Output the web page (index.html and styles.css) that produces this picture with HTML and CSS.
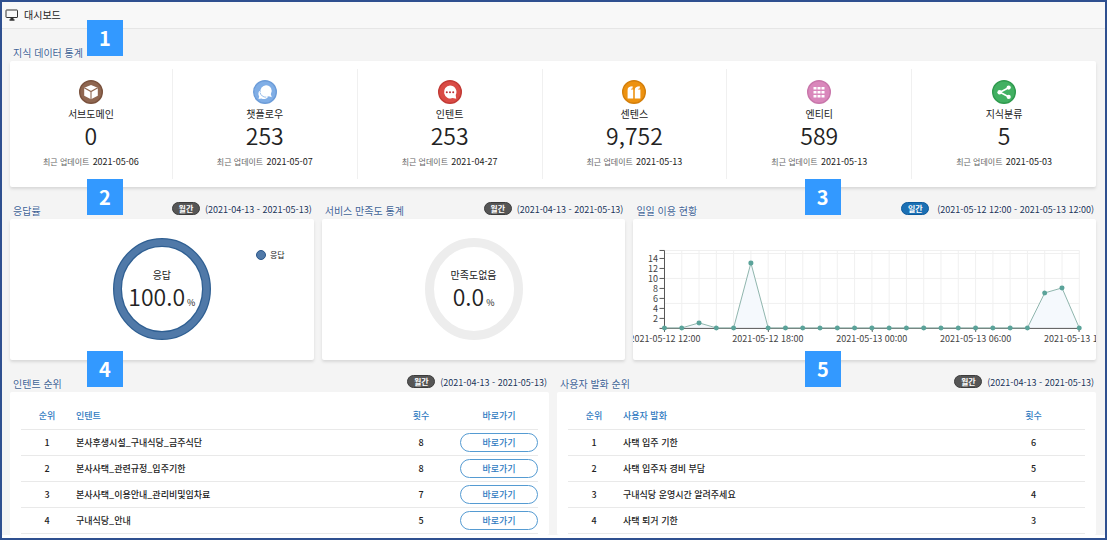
FILE: index.html
```html
<!DOCTYPE html>
<html lang="ko">
<head>
<meta charset="utf-8">
<title>대시보드</title>
<link rel="stylesheet" href="styles.css">
</head>
<body>
<div class="frame">
  <header class="topbar">
    <svg class="topbar-icon" width="14" height="12" viewBox="0 0 14 12" fill="none" stroke="#333"><rect x="1" y="1" width="11.5" height="7.5" rx="0.5"/><path d="M5.5 9.5h3M4.5 11h5" stroke-width="1.4"/></svg>
    <h1 class="topbar-title">대시보드</h1>
  </header>
  <main class="content">
    <section>
      <div class="head">
        <h2 class="title">지식 데이터 통계</h2>
        <span class="marker marker-left">1</span>
      </div>
      <div class="card stats">
        <div class="stat">
          <svg class="stat-icon" viewBox="0 0 24 24"><circle cx="12" cy="12" r="11.3" fill="#8f6650" stroke="#7a523d" stroke-width="1.4"/><path d="M12 5l6.8 2.8v8L12 19.3l-6.8-3.5v-8z" fill="#fff"/><path d="M5.2 7.8L12 11.6l6.8-3.8M12 11.6v7.7" fill="none" stroke="#8f6650" stroke-width="1.1"/></svg>
          <h3 class="stat-name">서브도메인</h3>
          <p class="big">0</p>
          <p class="updated">최근 업데이트 <time>2021-05-06</time></p>
        </div>
        <div class="stat">
          <svg class="stat-icon" viewBox="0 0 24 24"><circle cx="12" cy="12" r="11.3" fill="#80aee6" stroke="#6c9cd8" stroke-width="1.4"/><path d="M13 5.2a5.8 5.8 0 0 1 4.8 9l1 3-3-1A5.8 5.8 0 1 1 13 5.2z" fill="#fff"/><path d="M6.2 11c-1.200 2-.9 4 0 5.400l-.7 2.700 2.900-.7c2.200 1 5 .6 6.400-1.200" fill="#fff"/><path d="M7 12.500c.8 3 3.200 4.800 6.200 4.700" fill="none" stroke="#80aee6" stroke-width=".8"/></svg>
          <h3 class="stat-name">챗플로우</h3>
          <p class="big">253</p>
          <p class="updated">최근 업데이트 <time>2021-05-07</time></p>
        </div>
        <div class="stat">
          <svg class="stat-icon" viewBox="0 0 24 24"><circle cx="12" cy="12" r="11.3" fill="#d94b45" stroke="#c23a35" stroke-width="1.4"/><path d="M12 5.500a6.500 6.500 0 0 1 5.700 9.600l.5 3.600-3.500-.6A6.500 6.500 0 1 1 12 5.500z" fill="#fff"/><g fill="#b92f35"><circle cx="8.800" cy="12.200" r="1"/><circle cx="12" cy="12.200" r="1"/><circle cx="15.200" cy="12.200" r="1"/></g></svg>
          <h3 class="stat-name">인텐트</h3>
          <p class="big">253</p>
          <p class="updated">최근 업데이트 <time>2021-04-27</time></p>
        </div>
        <div class="stat">
          <svg class="stat-icon" viewBox="0 0 24 24"><circle cx="12" cy="12" r="11.3" fill="#ed9210" stroke="#d37f0b" stroke-width="1.4"/><path d="M5.600 18.500V10c0-2.600 1.700-3.800 5-3.800v2.200c-1 0-1.700.4-1.700 1.200h2.300v8.900zM12.800 18.500V10c0-2.600 1.700-3.800 5-3.800v2.200c-1 0-1.700.4-1.700 1.200h2.300v8.900z" fill="#fff"/></svg>
          <h3 class="stat-name">센텐스</h3>
          <p class="big">9,752</p>
          <p class="updated">최근 업데이트 <time>2021-05-13</time></p>
        </div>
        <div class="stat">
          <svg class="stat-icon" viewBox="0 0 24 24"><circle cx="12" cy="12" r="11.3" fill="#d987bb" stroke="#c876aa" stroke-width="1.4"/><path d="M6.500 7h3v2.500h-3zm4 0h3v2.500h-3zm4 0h3v2.500h-3zm-8 4h3v2.500h-3zm4 0h3v2.500h-3zm4 0h3v2.500h-3zm-8 4h3v2.500h-3zm4 0h3v2.500h-3zm4 0h3v2.500h-3z" fill="#fff"/></svg>
          <h3 class="stat-name">엔티티</h3>
          <p class="big">589</p>
          <p class="updated">최근 업데이트 <time>2021-05-13</time></p>
        </div>
        <div class="stat">
          <svg class="stat-icon" viewBox="0 0 24 24"><circle cx="12" cy="12" r="11.3" fill="#42b062" stroke="#2f9a4e" stroke-width="1.4"/><path d="M16.500 7.700L8 12.300l8.500 4.500" fill="none" stroke="#fff" stroke-width="1.600"/><g fill="#fff"><circle cx="16.700" cy="7.600" r="2.100"/><circle cx="7.600" cy="12.300" r="2.200"/><circle cx="16.700" cy="16.900" r="2.100"/></g></svg>
          <h3 class="stat-name">지식분류</h3>
          <p class="big">5</p>
          <p class="updated">최근 업데이트 <time>2021-05-03</time></p>
        </div>
      </div>
    </section>

    <div class="charts">
      <section>
        <div class="head">
          <h2 class="title">응답률</h2>
          <span class="pill">월간</span><span class="period">(2021-04-13 - 2021-05-13)</span>
          <span class="marker marker-left">2</span>
        </div>
        <div class="card chart-card">
          <div class="donut">
            <svg class="ring" viewBox="0 0 98 102" fill="none"><ellipse cx="49" cy="51" rx="44.500" ry="46.500" stroke="#2f5f92" stroke-width="9"/><ellipse cx="49" cy="51" rx="44.500" ry="46.500" stroke="#5079a8" stroke-width="6.500"/></svg>
            <div class="donut-text"><p class="donut-name">응답</p><p class="big">100.0<small class="unit">%</small></p></div>
          </div>
          <p class="legend"><span class="legend-dot"></span>응답</p>
        </div>
      </section>
      <section>
        <div class="head">
          <h2 class="title">서비스 만족도 통계</h2>
          <span class="pill">월간</span><span class="period">(2021-04-13 - 2021-05-13)</span>
        </div>
        <div class="card chart-card">
          <div class="donut">
            <svg class="ring" viewBox="0 0 98 102" fill="none"><ellipse cx="49" cy="51" rx="44.500" ry="46.500" stroke="#ededed" stroke-width="9"/></svg>
            <div class="donut-text"><p class="donut-name">만족도없음</p><p class="big">0.0<small class="unit">%</small></p></div>
          </div>
        </div>
      </section>
      <section>
        <div class="head">
          <h2 class="title">일일 이용 현황</h2>
          <span class="pill pill-day">일간</span><span class="period">(2021-05-12 12:00 - 2021-05-13 12:00)</span>
          <span class="marker marker-usage">3</span>
        </div>
        <div class="card chart-card">
          <svg class="usage" viewBox="0 0 463 141" fill="none">
            <defs><marker id="dot" markerWidth="6" markerHeight="6" refX="3" refY="3" markerUnits="userSpaceOnUse"><circle cx="3" cy="3" r="2.500" fill="#5ba39a"/></marker></defs>
            <path stroke="#f0f0f0" d="M31.500 31.500h415.200M31.500 34.500h415.200M31.500 59.500h415.200M31.500 84.500h415.200M48.800 31.500v77M66.100 31.500v77M83.400 31.500v77M100.700 31.500v77M118 31.500v77M135.300 31.500v77M152.600 31.500v77M169.900 31.500v77M187.200 31.500v77M204.500 31.500v77M221.800 31.500v77M239.100 31.500v77M256.400 31.500v77M273.700 31.500v77M291 31.500v77M308.300 31.500v77M325.600 31.500v77M342.900 31.500v77M360.200 31.500v77M377.500 31.500v77M394.800 31.500v77M412.100 31.500v77M429.400 31.500v77M446.700 31.500v77"/>
            <path fill="#f5f9fd" d="M31.500 109h17.300l17.300-5 17.300 5h17.300L118 44l17.300 65h259.500l17.300-35 17.300-5 17.300 40z"/>
            <path stroke="#555" d="M26.500 31.500h5v77.500M26.500 39.500h5M26.500 49.500h5M26.500 59.500h5M26.500 69.500h5M26.500 79.500h5M26.500 89.500h5M26.500 99.500h5M26.500 109.500h420.200M31.500 109v4M135.500 109v4M239.500 109v4M343 109v4M446.500 109v4"/>
            <path class="series" d="M31.500 109L48.800 109L66.100 104L83.400 109L100.700 109L118 44L135.300 109L152.600 109L169.900 109L187.200 109L204.500 109L221.800 109L239.100 109L256.400 109L273.700 109L291 109L308.300 109L325.600 109L342.900 109L360.200 109L377.500 109L394.800 109L412.100 74L429.400 69L446.700 109"/>
            <g class="axis axis-y"><text x="25" y="43">14</text><text x="25" y="53">12</text><text x="25" y="63">10</text><text x="25" y="73">8</text><text x="25" y="83">6</text><text x="25" y="93">4</text><text x="25" y="103">2</text></g>
            <g class="axis axis-x"><text x="32" y="123">2021-05-12 12:00</text><text x="135" y="123">2021-05-12 18:00</text><text x="239" y="123">2021-05-13 00:00</text><text x="343" y="123">2021-05-13 06:00</text><text x="447" y="123">2021-05-13 12:00</text></g>
          </svg>
        </div>
      </section>
    </div>

    <div class="ranks">
      <section class="rank-section">
        <div class="head">
          <h2 class="title">인텐트 순위</h2>
          <span class="pill">월간</span><span class="period">(2021-04-13 - 2021-05-13)</span>
          <span class="marker marker-left">4</span>
        </div>
        <div class="card rank-card">
          <table class="rank">
            <thead><tr><th class="col-no">순위</th><th class="col-name">인텐트</th><th class="col-count">횟수</th><th class="col-go">바로가기</th></tr></thead>
            <tbody>
              <tr><td class="col-no">1</td><td class="col-name">본사후생시설_구내식당_금주식단</td><td class="col-count">8</td><td class="col-go"><button class="go" type="button">바로가기</button></td></tr>
              <tr><td class="col-no">2</td><td class="col-name">본사사택_관련규정_입주기한</td><td class="col-count">8</td><td class="col-go"><button class="go" type="button">바로가기</button></td></tr>
              <tr><td class="col-no">3</td><td class="col-name">본사사택_이용안내_관리비및임차료</td><td class="col-count">7</td><td class="col-go"><button class="go" type="button">바로가기</button></td></tr>
              <tr><td class="col-no">4</td><td class="col-name">구내식당_안내</td><td class="col-count">5</td><td class="col-go"><button class="go" type="button">바로가기</button></td></tr>
            </tbody>
          </table>
        </div>
      </section>
      <section class="rank-section">
        <div class="head">
          <h2 class="title">사용자 발화 순위</h2>
          <span class="pill">월간</span><span class="period">(2021-04-13 - 2021-05-13)</span>
          <span class="marker marker-speech">5</span>
        </div>
        <div class="card rank-card">
          <table class="rank">
            <thead><tr><th class="col-no">순위</th><th class="col-name">사용자 발화</th><th class="col-total">횟수</th></tr></thead>
            <tbody>
              <tr><td class="col-no">1</td><td class="col-name">사택 입주 기한</td><td class="col-total">6</td></tr>
              <tr><td class="col-no">2</td><td class="col-name">사택 입주자 경비 부담</td><td class="col-total">5</td></tr>
              <tr><td class="col-no">3</td><td class="col-name">구내식당 운영시간 알려주세요</td><td class="col-total">4</td></tr>
              <tr><td class="col-no">4</td><td class="col-name">사택 퇴거 기한</td><td class="col-total">3</td></tr>
            </tbody>
          </table>
        </div>
      </section>
    </div>
  </main>
</div>
</body>
</html>
```

FILE: styles.css
```css
* {
  box-sizing: border-box;
}

body,
h1,
h2,
h3,
p {
  margin: 0;
  font-weight: 400;
}

body {
  font-family: "Noto Sans CJK KR", "Noto Sans", sans-serif;
  font-size: 9px;
  line-height: 14px;
  color: #222;
  background: #fff;
}

.frame {
  display: flex;
  flex-direction: column;
  min-height: 100vh;
  padding-bottom: 3px;
  border: 2px solid #2f5090;
}

.topbar {
  display: flex;
  align-items: center;
  gap: 5px;
  height: 27px;
  padding-left: 3px;
  background: #f8f8f8;
  border-bottom: 1px solid #e6e6e6;
}

.topbar-title {
  font-size: 10px;
}

.content {
  flex: 1;
  display: flex;
  flex-direction: column;
  padding: 0 9px 0 8px;
  background: #f4f4f4;
}

.head {
  position: relative;
  display: flex;
  align-items: flex-end;
  height: 32px;
  padding: 0 2px 1px 3px;
}

.title {
  flex: 1;
  font-size: 10px;
  color: #3f6396;
  text-shadow: 0 0 2px #fff, 0 0 2px #fff;
}

.pill {
  margin: 0 5px 3px 0;
  width: 28px;
  height: 13px;
  border: 1px solid #3c3c3c;
  border-radius: 7px;
  background: #565656;
  color: #fff;
  font-size: 8px;
  font-weight: 700;
  line-height: 11px;
  text-align: center;
}

.pill-day {
  margin-right: 8px;
  border-color: #0c5a9c;
  background: #1b70b4;
}

.period {
  padding-bottom: 1px;
  color: #203358;
  text-shadow: 0 0 2px #fff, 0 0 2px #fff;
}

.marker {
  position: absolute;
  z-index: 1;
  top: -9px;
  width: 36px;
  height: 36px;
  background: #3399ff;
  color: #fff;
  font-size: 20px;
  font-weight: 700;
  line-height: 35px;
  text-align: center;
}

.charts .marker {
  top: -8px;
}

.marker-left {
  left: 77px;
}

.marker-usage {
  left: 37%;
}

.marker-speech {
  left: 46%;
}

.card {
  border-radius: 2px;
  background: #fff;
  box-shadow: 0 2px 3px #d8d8d8;
}

.stats {
  display: grid;
  grid-template-columns: 162fr repeat(5, 185fr);
  padding: 8px 0;
}

.stat {
  display: flex;
  flex-direction: column;
  align-items: center;
  height: 110px;
  padding-top: 11px;
}

.stat + .stat {
  border-left: 1px solid #f0f0f0;
}

.stat-icon {
  width: 24px;
  height: 24px;
}

.stat-name,
.donut-name {
  font-size: 10px;
}

.stat-name {
  margin-top: 3px;
}

.big {
  font-size: 23px;
  font-weight: 350;
  line-height: 28px;
}

.updated {
  margin-top: 6px;
  font-size: 8px;
  color: #666;
}

.updated time {
  margin-left: 1px;
  font-size: 9px;
  color: #222;
}

.charts {
  display: grid;
  grid-template-columns: 304fr 304fr 463fr;
  gap: 8px;
}

.chart-card {
  display: grid;
  min-height: 141px;
  overflow: hidden;
}

.donut {
  grid-area: 1 / 1;
  justify-self: center;
  display: grid;
  align-self: start;
  padding-top: 19px;
}

.ring {
  grid-area: 1 / 1;
  width: 98px;
  height: 102px;
}

.donut-text {
  grid-area: 1 / 1;
  padding-top: 30px;
  text-align: center;
}

.unit {
  margin-left: 2px;
  font-size: 9px;
  font-weight: 400;
}

.legend {
  grid-area: 1 / 1;
  place-self: start end;
  display: flex;
  align-items: center;
  gap: 4px;
  padding: 29px 29px 0 0;
  font-size: 8px;
}

.legend-dot {
  width: 10px;
  height: 10px;
  border: 1px solid #2a568a;
  border-radius: 50%;
  background: #5079a8;
}

.usage {
  display: block;
  width: 100%;
}

.series {
  stroke: #8fb5ad;
  marker-start: url(#dot);
  marker-mid: url(#dot);
  marker-end: url(#dot);
}

.axis {
  font-size: 9px;
  fill: #444;
}

.axis-y {
  text-anchor: end;
}

.axis-x {
  text-anchor: middle;
}

.ranks {
  flex: 1;
  display: grid;
  grid-template-columns: 1fr 1fr;
  gap: 8px;
}

.rank-section {
  display: flex;
  flex-direction: column;
}

.rank-card {
  flex: 1;
  padding: 11px 11px 0;
  box-shadow: none;
}

.rank {
  width: 100%;
  table-layout: fixed;
  border-collapse: collapse;
}

.rank th,
.rank td {
  height: 26px;
  padding: 1px 0 0;
  border-bottom: 1px solid #e9e9e9;
  font-weight: 500;
  text-align: center;
}

.rank th {
  color: #2f7abf;
}

.rank .col-no {
  width: 52px;
}

.rank .col-name {
  padding-left: 3px;
  text-align: left;
}

.rank .col-count,
.rank .col-go {
  width: 78px;
}

.rank .col-total {
  width: 103px;
}

.go {
  display: block;
  width: 100%;
  height: 19px;
  padding: 0;
  border: 1px solid #559bd2;
  border-radius: 10px;
  background: #fff;
  color: #2f7abf;
  font: inherit;
}
```
